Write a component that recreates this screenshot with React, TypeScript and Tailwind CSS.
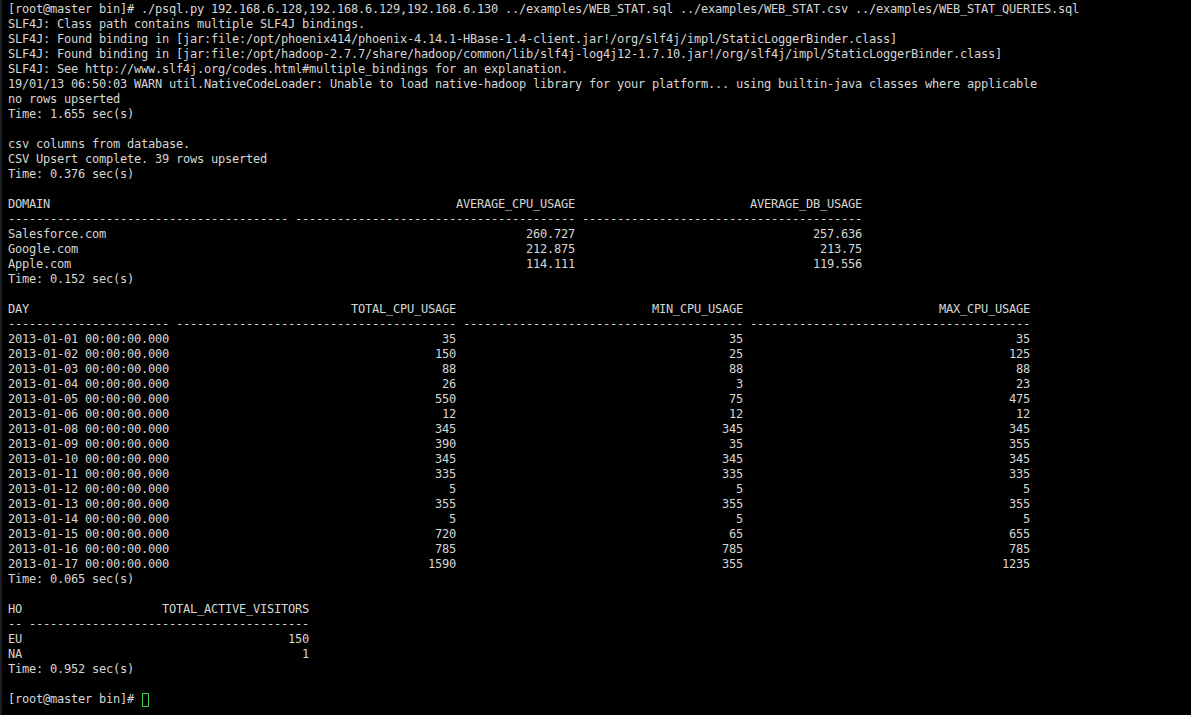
import React from "react";

const L = (s: string, w: number) => s.padEnd(w, " ");
const R = (s: string, w: number) => s.padStart(w, " ");
const D = (n: number) => "-".repeat(n);

const days: [string, string, string, string][] = [
  ["2013-01-01 00:00:00.000", "35", "35", "35"],
  ["2013-01-02 00:00:00.000", "150", "25", "125"],
  ["2013-01-03 00:00:00.000", "88", "88", "88"],
  ["2013-01-04 00:00:00.000", "26", "3", "23"],
  ["2013-01-05 00:00:00.000", "550", "75", "475"],
  ["2013-01-06 00:00:00.000", "12", "12", "12"],
  ["2013-01-08 00:00:00.000", "345", "345", "345"],
  ["2013-01-09 00:00:00.000", "390", "35", "355"],
  ["2013-01-10 00:00:00.000", "345", "345", "345"],
  ["2013-01-11 00:00:00.000", "335", "335", "335"],
  ["2013-01-12 00:00:00.000", "5", "5", "5"],
  ["2013-01-13 00:00:00.000", "355", "355", "355"],
  ["2013-01-14 00:00:00.000", "5", "5", "5"],
  ["2013-01-15 00:00:00.000", "720", "65", "655"],
  ["2013-01-16 00:00:00.000", "785", "785", "785"],
  ["2013-01-17 00:00:00.000", "1590", "355", "1235"],
];

const lines: string[] = [
  "[root@master bin]# ./psql.py 192.168.6.128,192.168.6.129,192.168.6.130 ../examples/WEB_STAT.sql ../examples/WEB_STAT.csv ../examples/WEB_STAT_QUERIES.sql",
  "SLF4J: Class path contains multiple SLF4J bindings.",
  "SLF4J: Found binding in [jar:file:/opt/phoenix414/phoenix-4.14.1-HBase-1.4-client.jar!/org/slf4j/impl/StaticLoggerBinder.class]",
  "SLF4J: Found binding in [jar:file:/opt/hadoop-2.7.7/share/hadoop/common/lib/slf4j-log4j12-1.7.10.jar!/org/slf4j/impl/StaticLoggerBinder.class]",
  "SLF4J: See http://www.slf4j.org/codes.html#multiple_bindings for an explanation.",
  "19/01/13 06:50:03 WARN util.NativeCodeLoader: Unable to load native-hadoop library for your platform... using builtin-java classes where applicable",
  "no rows upserted",
  "Time: 1.655 sec(s)",
  "",
  "csv columns from database.",
  "CSV Upsert complete. 39 rows upserted",
  "Time: 0.376 sec(s)",
  "",
  L("DOMAIN", 40) + " " + R("AVERAGE_CPU_USAGE", 40) + " " + R("AVERAGE_DB_USAGE", 40),
  D(40) + " " + D(40) + " " + D(40),
  L("Salesforce.com", 40) + " " + R("260.727", 40) + " " + R("257.636", 40),
  L("Google.com", 40) + " " + R("212.875", 40) + " " + R("213.75", 40),
  L("Apple.com", 40) + " " + R("114.111", 40) + " " + R("119.556", 40),
  "Time: 0.152 sec(s)",
  "",
  L("DAY", 23) + " " + R("TOTAL_CPU_USAGE", 40) + " " + R("MIN_CPU_USAGE", 40) + " " + R("MAX_CPU_USAGE", 40),
  D(23) + " " + D(40) + " " + D(40) + " " + D(40),
  ...days.map((d) => d[0] + " " + R(d[1], 40) + " " + R(d[2], 40) + " " + R(d[3], 40)),
  "Time: 0.065 sec(s)",
  "",
  "HO " + R("TOTAL_ACTIVE_VISITORS", 40),
  "-- " + D(40),
  "EU " + R("150", 40),
  "NA " + R("1", 40),
  "Time: 0.952 sec(s)",
  "",
];

export default function App() {
  return (
    <div className="w-[1191px] h-[715px] bg-black overflow-hidden flex">
      <div className="w-[2px] h-full bg-[#1c1f24]" />
      <div
        className="pl-[6px] pt-[2px] text-[#d6d6d6] text-[12px] leading-[15px] tracking-[-0.2246px] whitespace-pre"
        style={{ fontFamily: '"DejaVu Sans Mono", "Liberation Mono", monospace' }}
      >
        {lines.map((l, i) => (
          <div key={i} className="h-[15px]">
            {l}
          </div>
        ))}
        <div className="h-[15px] flex items-center">
          <span>{"[root@master bin]# "}</span>
          <span className="inline-block w-[7px] h-[14px] border border-[#3fd13f] ml-[1px]" />
        </div>
      </div>
    </div>
  );
}
